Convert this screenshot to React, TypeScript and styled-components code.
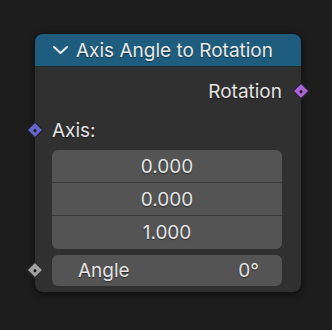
import React from "react";
import styled, { createGlobalStyle } from "styled-components";

const Global = createGlobalStyle`
  html, body { margin: 0; padding: 0; background: #1d1d1d; }
  body { font-family: Inter, "Noto Sans", sans-serif; }
`;

const Canvas = styled.div`
  width: 332px;
  height: 330px;
  padding: 34px 0 0 35px;
  box-sizing: border-box;
  background: #1d1d1d;
`;

const Node = styled.div`
  position: relative;
  width: 266px;
  border-radius: 8px;
  background: #303030;
  box-shadow: 0 0 0 1px #141414, 0 2px 8px rgba(0, 0, 0, 0.55);
  color: #e4e4e4;
  text-shadow: 0 1px 1px rgba(0, 0, 0, 0.5);
`;

const Header = styled.div`
  height: 32px;
  display: flex;
  align-items: center;
  gap: 7px;
  padding-left: 17px;
  background: #1e5d7e;
  border-radius: 8px 8px 0 0;
  border-bottom: 1px solid #1c2a33;
  font-size: 19px;
  color: #eaeaea;
`;

const Body = styled.div`
  display: flex;
  flex-direction: column;
  padding: 0 19px 6px 17px;
`;

const Row = styled.div<{ $h: number; $align?: string }>`
  position: relative;
  height: ${(p) => p.$h}px;
  display: flex;
  align-items: center;
  justify-content: ${(p) => p.$align ?? "flex-start"};
  font-size: 19px;
`;

const Socket = styled.div<{ $color: string; $side: "left" | "right" }>`
  position: absolute;
  top: 50%;
  ${(p) => (p.$side === "left" ? "left: -23px;" : "right: -25px;")}
  width: 10px;
  height: 10px;
  margin-top: -6.5px;
  background: ${(p) => p.$color};
  border: 1.5px solid #111;
  transform: rotate(45deg);
  display: flex;
  align-items: center;
  justify-content: center;
  &::after {
    content: "";
    width: 3px;
    height: 3px;
    border-radius: 50%;
    background: #1a1a1a;
  }
`;

const Vector = styled.div`
  margin-top: 4px;
  display: flex;
  flex-direction: column;
  border-radius: 6px;
  overflow: hidden;
  background: #545454;
`;

const VecCell = styled.div<{ $last?: boolean }>`
  display: flex;
  align-items: center;
  justify-content: center;
  font-size: 19px;
  border-bottom: ${(p) => (p.$last ? "none" : "1px solid #3a3a3a")};
  height: ${(p) => (p.$last ? 33 : 32)}px;
`;

const Field = styled.div`
  position: relative;
  margin-top: 6px;
  height: 31px;
  border-radius: 6px;
  background: #545454;
  display: flex;
  align-items: center;
  justify-content: space-between;
  padding: 0 23px 0 26px;
  font-size: 19px;
`;

const Chevron = () => (
  <svg width="17" height="10" viewBox="0 0 17 10">
    <path d="M2 2 L8.5 8 L15 2" fill="none" stroke="#e8e8e8" strokeWidth="2" strokeLinecap="round" strokeLinejoin="round" />
  </svg>
);

export default function App() {
  return (
    <>
      <Global />
      <Canvas>
        <Node>
          <Header>
            <Chevron />
            <span>Axis Angle to Rotation</span>
          </Header>
          <Body>
            <Row $h={48} $align="flex-end">
              Rotation
              <Socket $color="#a863d6" $side="right" />
            </Row>
            <Row $h={31}>
              Axis:
              <Socket $color="#6666cc" $side="left" />
            </Row>
            <Vector>
              <VecCell>0.000</VecCell>
              <VecCell>0.000</VecCell>
              <VecCell $last>1.000</VecCell>
            </Vector>
            <Field>
              <span>Angle</span>
              <span>0°</span>
              <Socket $color="#a1a1a1" $side="left" />
            </Field>
          </Body>
        </Node>
      </Canvas>
    </>
  );
}
